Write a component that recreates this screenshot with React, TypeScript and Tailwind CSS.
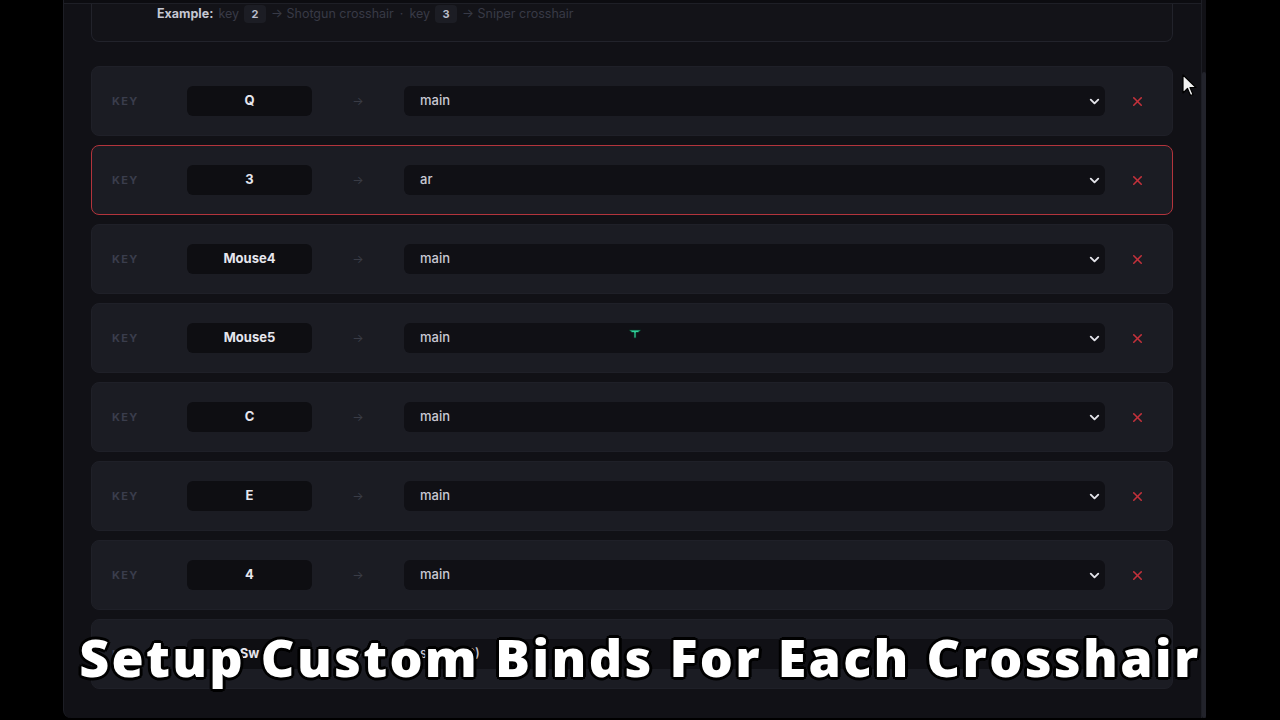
import { ChevronDown, X } from 'lucide-react';

interface Bind {
  id: number;
  key: string;
  crosshair: string;
  active?: boolean;
}

const binds: Bind[] = [
  { id: 1, key: 'Q', crosshair: 'main' },
  { id: 2, key: '3', crosshair: 'ar', active: true },
  { id: 3, key: 'Mouse4', crosshair: 'main' },
  { id: 4, key: 'Mouse5', crosshair: 'main' },
  { id: 5, key: 'C', crosshair: 'main' },
  { id: 6, key: 'E', crosshair: 'main' },
  { id: 7, key: '4', crosshair: 'main' },
  { id: 8, key: 'Sw', crosshair: 'sniper (2)' },
];

function BindRow({ bind }: { bind: Bind }) {
  return (
    <div
      className={`h-[70px] shrink-0 flex items-center pl-[20px] rounded-lg bg-[#1b1c23] border ${
        bind.active ? 'border-[#b3343c]' : 'border-[#1f2028]'
      }`}
    >
      <span className="w-[75px] text-[11px] font-bold tracking-[0.12em] text-[#3a3d4c]">KEY</span>
      <div className="w-[125px] h-[30px] rounded-md bg-[#0e0e12] flex items-center justify-center text-[13px] font-bold text-[#e6e6ee]">
        {bind.key}
      </div>
      <div className="w-[92px] flex justify-center text-[12px] text-[#3a3c46]">→</div>
      <div className="w-[701px] h-[30px] rounded-md bg-[#101015] flex items-center justify-between pl-[16px] pr-[3px]">
        <span className="text-[13px] font-medium text-[#c9c9d3]">{bind.crosshair}</span>
        <ChevronDown className="w-[15px] h-[15px] text-[#e4e4ea]" strokeWidth={3} />
      </div>
      <div className="flex-1 flex justify-center pr-[2px]">
        <X className="w-[15px] h-[15px] text-[#c3313b]" strokeWidth={2.5} />
      </div>
    </div>
  );
}

function Kbd({ children }: { children: string }) {
  return (
    <span className="inline-flex items-center justify-center w-[22px] h-[18px] rounded bg-[#1c1d24] text-[11px] font-bold text-[#b9bccb]">
      {children}
    </span>
  );
}

export default function App() {
  return (
    <div className="relative w-[1280px] h-[720px] overflow-hidden bg-black flex font-['Inter',sans-serif]">
      <div className="w-[63px] shrink-0" />
      <div className="w-[1143px] h-[718px] flex bg-[#111116] border-l border-[#1d1e25] rounded-bl-lg overflow-hidden">
        <div className="flex-1 flex flex-col">
          <div className="h-[4px] shrink-0 bg-[#0c0c10] border-b border-[#1e1f26]" />
          <div className="flex flex-col gap-[9px] pl-[27px] pr-[28px]">
            <div className="h-[38px] mb-[15px] rounded-b-lg border-x border-b border-[#22232b] bg-[#131318] pl-[65px] pt-[1px] flex items-start">
              <div className="flex items-center gap-[5px] text-[12.5px] text-[#383a46]">
                <span className="text-[12.5px] font-bold text-[#c5c7d2]">Example:</span>
                <span>key</span>
                <Kbd>2</Kbd>
                <span>→ Shotgun crosshair</span>
                <span className="px-[1px]">·</span>
                <span>key</span>
                <Kbd>3</Kbd>
                <span>→ Sniper crosshair</span>
              </div>
            </div>
            {binds.map((bind) => (
              <BindRow key={bind.id} bind={bind} />
            ))}
          </div>
        </div>
        <div className="w-[5px] shrink-0 flex flex-col border-l border-[#1d1e25]">
          <div className="mt-[72px] flex-1 bg-[#22232b] rounded-full" />
        </div>
      </div>

      {/* cursor */}
      <svg className="absolute left-[1182px] top-[74px]" width="16" height="24" viewBox="0 0 16 24">
        <path d="M1 1 L1 19 L5.5 14.5 L8.5 21.5 L11 20.5 L8 13.5 L14 13.5 Z" fill="#f2f2f2" stroke="#000" strokeWidth="1.2" strokeLinejoin="round" />
      </svg>

      {/* tiny green marker */}
      <svg className="absolute left-[628px] top-[329px]" width="14" height="10" viewBox="0 0 14 10">
        <path d="M1 1 H13 L10 3.5 H8 V9 H6 V3.5 H4 Z" fill="#2fd39a" stroke="#0b2a20" strokeWidth="0.8" />
      </svg>

      {/* caption */}
      <div className="absolute left-0 right-0 top-[624px] flex justify-center">
        <span className="font-['Open_Sans',sans-serif] font-extrabold text-[52px] leading-[66px] text-white tracking-[2.3px] [text-shadow:3px_0_0_#000,-3px_0_0_#000,0_3px_0_#000,0_-3px_0_#000,2px_2px_0_#000,-2px_-2px_0_#000,2px_-2px_0_#000,-2px_2px_0_#000]">
          Setup Custom Binds For Each Crosshair
        </span>
      </div>
    </div>
  );
}
